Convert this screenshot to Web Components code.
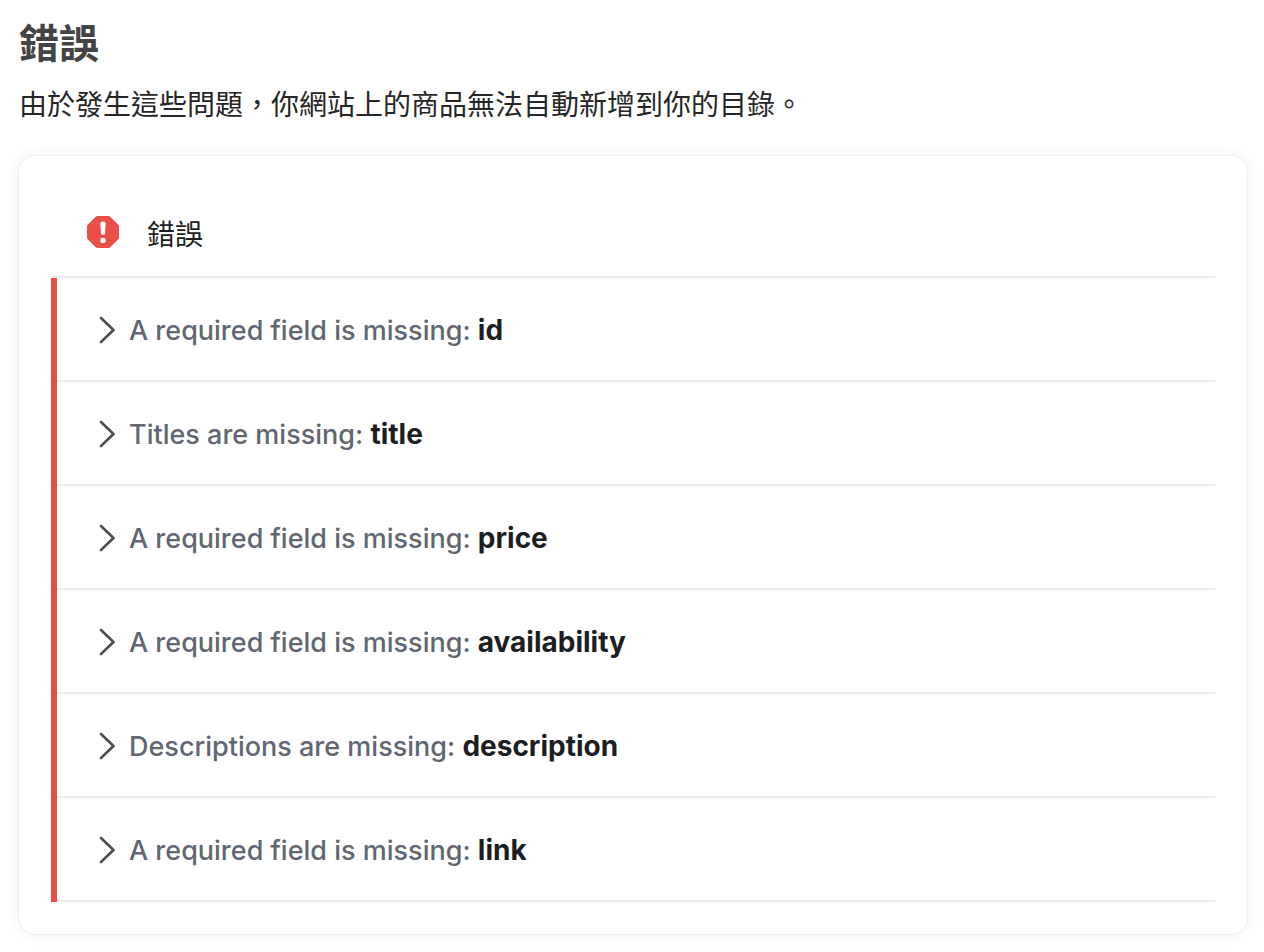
<!DOCTYPE html>
<html lang="zh-Hant">
<head>
<meta charset="utf-8">
<meta name="viewport" content="width=device-width, initial-scale=1">
<title>錯誤</title>
<style>
body{margin:0;background:#fff;color:#1c1e21;font-family:Inter,"Noto Sans CJK TC",sans-serif}
</style>
</head>
<body>
<error-page></error-page>
<script>
const define=(name,html)=>{
  const t=document.createElement('template');
  t.innerHTML=html;
  customElements.define(name,class extends HTMLElement{
    constructor(){super();this.attachShadow({mode:'open'}).append(t.content.cloneNode(true));}
  });
};

define('issue-row',`
<style>
:host{display:block;border-bottom:2px solid #ebebf0}
button{display:flex;align-items:center;gap:12px;width:100%;padding:34px 40px 30px;border:0;background:none;text-align:left;font:inherit;font-size:27px;font-weight:450;line-height:38px;color:#606770;cursor:pointer}
svg{flex:none;display:block}
::slotted(strong){color:#1c1e21;font-size:28px;line-height:28px;font-weight:700}
</style>
<button type="button" aria-expanded="false">
<svg width="20" height="30" viewBox="0 0 20 30" fill="none" stroke="#4b4f56" stroke-width="2.6" stroke-linecap="round" stroke-linejoin="round" aria-hidden="true"><path d="M4 2 16.500 14 4 26"/></svg>
<span><slot></slot></span>
</button>`);

define('issue-group',`
<style>
:host{display:block}
header{display:flex;align-items:flex-start;gap:28px;padding:28px 36px 22px;border-bottom:2px solid #ebebf0}
svg{flex:none;display:block}
h2{margin:0;font-size:28px;line-height:38px;font-weight:400}
.rows{border-left:6px solid #e94f47}
</style>
<header>
<svg width="32" height="32" viewBox="0 0 32 32" aria-hidden="true"><path d="M10.500 0h11q1 0 1.700.7l8.100 8.100q.7.700.7 1.700v11q0 1-.7 1.700l-8.100 8.100q-.7.700-1.700.7h-11q-1 0-1.700-.7L.700 23.200Q0 22.500 0 21.500v-11q0-1 .7-1.700L8.800.700Q9.500 0 10.500 0z" fill="#e94f47"/><path d="M13.300 7.500Q13.300 5.500 16 5.500t2.700 2L18 17.500Q17.800 19 16 19t-2-1.500z" fill="#fff"/><circle cx="16" cy="24.400" r="2.700" fill="#fff"/></svg>
<h2><slot name="title"></slot></h2>
</header>
<div class="rows"><slot></slot></div>`);

define('surface-card',`
<style>
:host{display:block;padding:32px;border-radius:16px;background:#fff;box-shadow:0 0 2px rgba(0,0,0,.12),0 0 16px rgba(0,0,0,.07)}
</style><slot></slot>`);

define('error-page',`
<style>
:host{display:block;padding:20px 17px 18px 19px}
h1{margin:0;font-size:40px;line-height:48px;font-weight:700;color:#444}
p{margin:15px 0 29px;font-size:28px;line-height:44px;color:#262626}
</style>
<h1>錯誤</h1>
<p>由於發生這些問題，你網站上的商品無法自動新增到你的目錄。</p>
<surface-card>
<issue-group>
<span slot="title">錯誤</span>
<issue-row>A required field is missing: <strong>id</strong></issue-row>
<issue-row>Titles are missing: <strong>title</strong></issue-row>
<issue-row>A required field is missing: <strong>price</strong></issue-row>
<issue-row>A required field is missing: <strong>availability</strong></issue-row>
<issue-row>Descriptions are missing: <strong>description</strong></issue-row>
<issue-row>A required field is missing: <strong>link</strong></issue-row>
</issue-group>
</surface-card>`);
</script>
</body>
</html>
